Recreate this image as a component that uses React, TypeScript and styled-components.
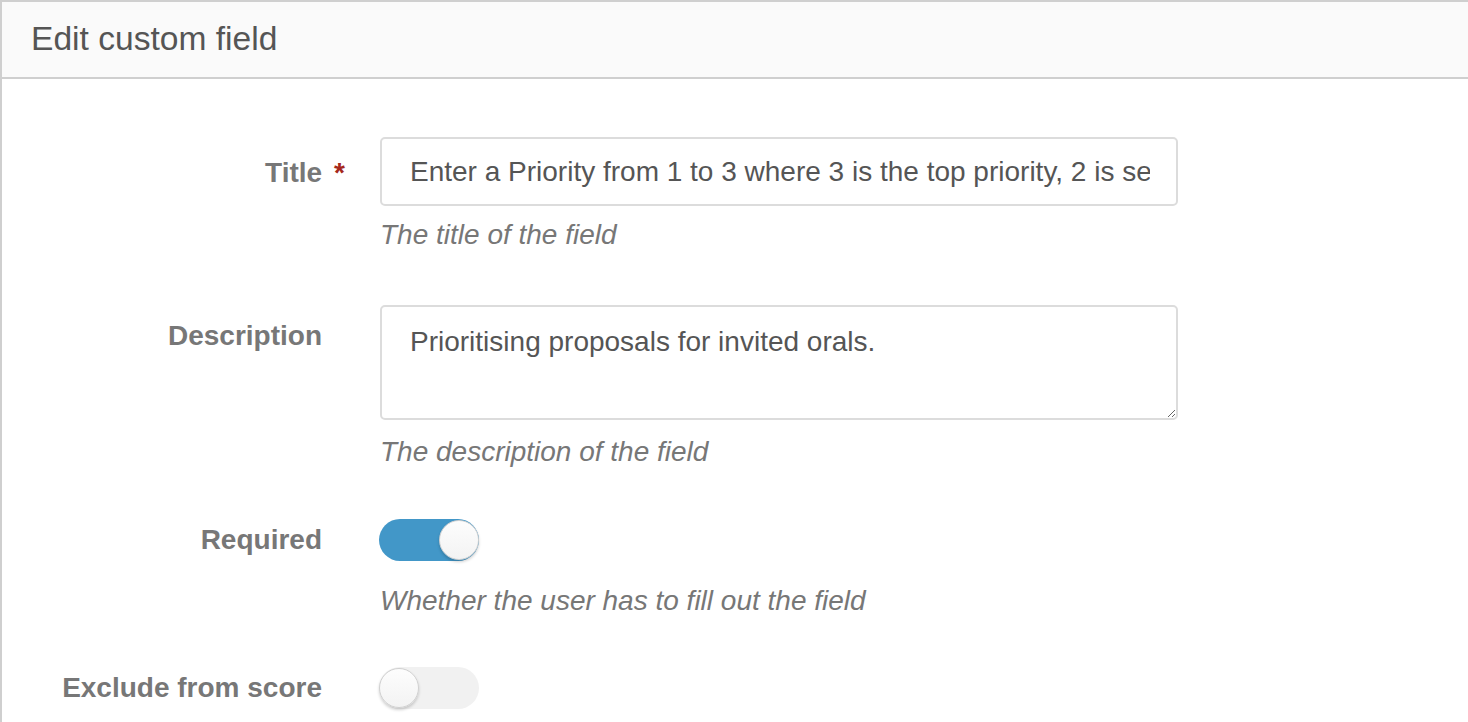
import React from "react";
import styled, { createGlobalStyle } from "styled-components";

const Global = createGlobalStyle`
  html, body { margin: 0; padding: 0; background: #fff; }
  body { font-family: "Liberation Sans", Arial, sans-serif; overflow: hidden; }
`;

const Panel = styled.section`
  width: 1500px;
  border: 2px solid #cfcfcf;
  border-right: none;
  box-sizing: border-box;
  background: #fff;
  min-height: 740px;
`;

const Header = styled.header`
  height: 75px;
  background: #fafafa;
  border-bottom: 2px solid #cfcfcf;
  display: flex;
  align-items: center;
  padding-left: 29px;
  box-sizing: content-box;
`;

const Heading = styled.h2`
  margin: 0;
  font-weight: 400;
  font-size: 33.6px;
  color: #555;
  line-height: 1;
  position: relative;
  top: -1px;
`;

const Body = styled.div`
  padding-top: 58px;
  display: grid;
  grid-template-columns: 320px 798px;
  column-gap: 58px;
  row-gap: 0;
`;

const Label = styled.label<{ $top: number }>`
  font-size: 28px;
  font-weight: 700;
  color: #777;
  text-align: right;
  padding-top: ${(p) => p.$top}px;
  line-height: 32px;
  white-space: nowrap;
`;

const Star = styled.span`
  color: #a5281b;
  margin-left: 12px;
  margin-right: -23px;
`;

const Field = styled.div<{ $mb: number }>`
  display: flex;
  flex-direction: column;
  margin-bottom: ${(p) => p.$mb}px;
`;

const TextInput = styled.input`
  box-sizing: border-box;
  width: 798px;
  height: 69px;
  border: 2px solid #dcdcdc;
  border-radius: 5px;
  padding: 0 26px 0 28px;
  font-family: "Liberation Sans", Arial, sans-serif;
  font-size: 28px;
  color: #555;
  outline: none;
`;

const TextArea = styled.textarea`
  box-sizing: border-box;
  width: 798px;
  height: 115px;
  border: 2px solid #dcdcdc;
  border-radius: 5px;
  padding: 17px 28px;
  font-family: "Liberation Sans", Arial, sans-serif;
  font-size: 28px;
  line-height: 36px;
  color: #555;
  outline: none;
  resize: vertical;
`;

const Hint = styled.p<{ $mt: number }>`
  margin: ${(p) => p.$mt}px 0 0;
  font-size: 28px;
  font-style: italic;
  color: #777;
  line-height: 32px;
`;

const Track = styled.div<{ $on: boolean }>`
  width: 100px;
  height: 42px;
  border-radius: 21px;
  background: ${(p) => (p.$on ? "#4297c8" : "#f1f1f1")};
  display: flex;
  align-items: center;
  justify-content: ${(p) => (p.$on ? "flex-end" : "flex-start")};
  box-sizing: border-box;
  margin-left: -1px;
`;

const Knob = styled.div`
  width: 40px;
  height: 40px;
  border-radius: 50%;
  background: linear-gradient(#fdfdfd, #f3f3f3);
  border: 1px solid #d0d0d0;
  box-sizing: border-box;
  box-shadow: 0 2px 3px rgba(0, 0, 0, 0.18);
`;

export default function App() {
  return (
    <>
      <Global />
      <Panel>
        <Header>
          <Heading>Edit custom field</Heading>
        </Header>
        <Body>
          <Label $top={20}>
            Title<Star>*</Star>
          </Label>
          <Field $mb={54}>
            <TextInput
              readOnly
              value="Enter a Priority from 1 to 3 where 3 is the top priority, 2 is second priority and 1 is lowest"
            />
            <Hint $mt={13}>The title of the field</Hint>
          </Field>

          <Label $top={15}>Description</Label>
          <Field $mb={51}>
            <TextArea readOnly value="Prioritising proposals for invited orals." />
            <Hint $mt={16}>The description of the field</Hint>
          </Field>

          <Label $top={5}>Required</Label>
          <Field $mb={50}>
            <Track $on>
              <Knob />
            </Track>
            <Hint $mt={24}>Whether the user has to fill out the field</Hint>
          </Field>

          <Label $top={5}>Exclude from score</Label>
          <Field $mb={0}>
            <Track $on={false}>
              <Knob />
            </Track>
          </Field>
        </Body>
      </Panel>
    </>
  );
}
